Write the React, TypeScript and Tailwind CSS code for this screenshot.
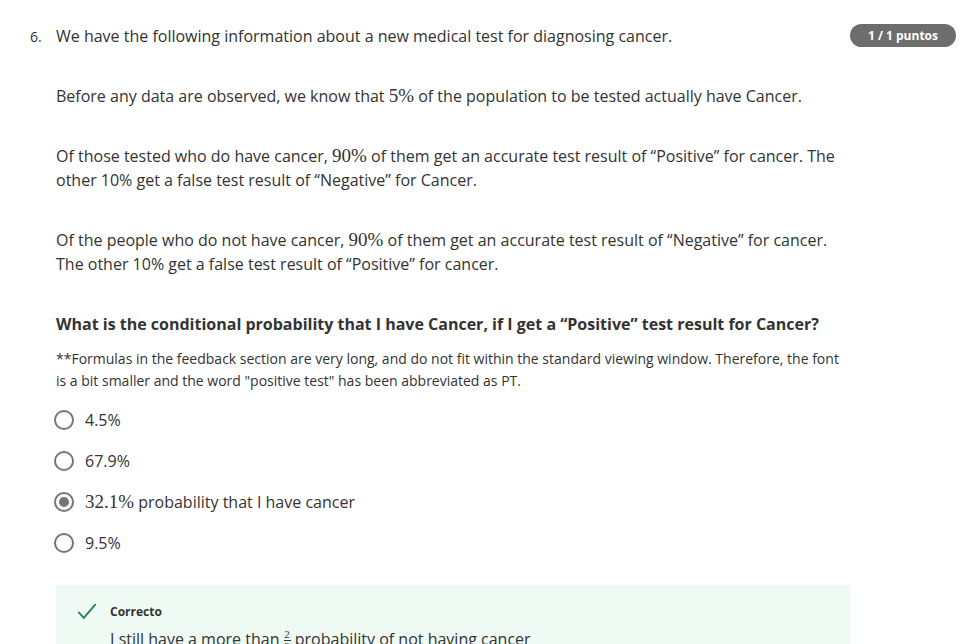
import React from 'react';

const M: React.FC<{ children: React.ReactNode }> = ({ children }) => (
  <span className="font-['Liberation_Serif',serif] text-[19px] leading-[20px]">{children}</span>
);

const Radio: React.FC<{ checked?: boolean }> = ({ checked }) => (
  <span className="flex h-5 w-5 shrink-0 items-center justify-center rounded-full border-2 border-[#757575] bg-white">
    {checked && <span className="h-[10px] w-[10px] rounded-full bg-[#757575]" />}
  </span>
);

const options: { label: React.ReactNode; checked?: boolean }[] = [
  { label: '4.5%' },
  { label: '67.9%' },
  {
    label: (
      <>
        <M>32.1%</M> probability that I have cancer
      </>
    ),
    checked: true,
  },
  { label: '9.5%' },
];

export default function App() {
  return (
    <div className="h-[644px] w-[964px] overflow-hidden bg-white font-['Open_Sans',sans-serif] text-[#333333]">
      <div className="flex pl-[30px] pr-2 pt-[24px]">
        <div className="w-[26px] pt-[2px] text-[14px] leading-[22px]">6.</div>
        <div className="w-[794px]">
          <p className="text-[16px] leading-[24px]">
            We have the following information about a new medical test for diagnosing cancer.
          </p>
          <p className="mt-[36px] text-[16px] leading-[24px]">
            Before any data are observed, we know that <M>5%</M> of the population to be tested actually have Cancer.
          </p>
          <p className="mt-[36px] text-[16px] leading-[24px]">
            Of those tested who do have cancer, <M>90%</M> of them get an accurate test result of “Positive” for cancer. The
            other 10% get a false test result of “Negative” for Cancer.
          </p>
          <p className="mt-[36px] text-[16px] leading-[24px]">
            Of the people who do not have cancer, <M>90%</M> of them get an accurate test result of “Negative” for cancer.
            The other 10% get a false test result of “Positive” for cancer.
          </p>
          <p className="mt-[36px] text-[16px] font-bold leading-[24px]">
            What is the conditional probability that I have Cancer, if I get a “Positive” test result for Cancer?
          </p>
          <p className="mt-[12px] text-[14px] leading-[22px]">
            **Formulas in the feedback section are very long, and do not fit within the standard viewing window. Therefore, the font
            is a bit smaller and the word "positive test" has been abbreviated as PT.
          </p>
          <div className="mt-[16px] flex flex-col gap-[17px]">
            {options.map((o, i) => (
              <div key={i} className="-ml-[2px] flex h-[24px] items-center gap-[11px]">
                <Radio checked={o.checked} />
                <span className="text-[16px] leading-[24px]">{o.label}</span>
              </div>
            ))}
          </div>
          <div className="mt-[30px] bg-[#f0faf5] px-[20px] pt-[16px] pb-4">
            <div className="flex items-center gap-[12px]">
              <svg width="22" height="22" viewBox="0 0 24 24" fill="none" stroke="#1f8354" strokeWidth="2" strokeLinecap="round" strokeLinejoin="round">
                <path d="M3 12.5l5.5 6L21 4" />
              </svg>
              <span className="text-[12px] font-bold leading-[18px]">Correcto</span>
            </div>
            <p className="ml-[34px] mt-[4px] text-[16px] leading-[24px]">
              I still have a more than{' '}
              <span className="inline-flex flex-col items-center align-middle font-['Liberation_Serif',serif] text-[11px] leading-[11px]">
                <span>2</span>
                <span className="w-[7px] border-t border-[#333333]" />
                <span>3</span>
              </span>{' '}
              probability of not having cancer
            </p>
          </div>
        </div>
        <div className="ml-auto">
          <span className="flex h-[23px] w-[106px] items-center justify-center rounded-full bg-[#6d6d6d] text-[12px] font-bold text-white">
            1 / 1 puntos
          </span>
        </div>
      </div>
    </div>
  );
}
